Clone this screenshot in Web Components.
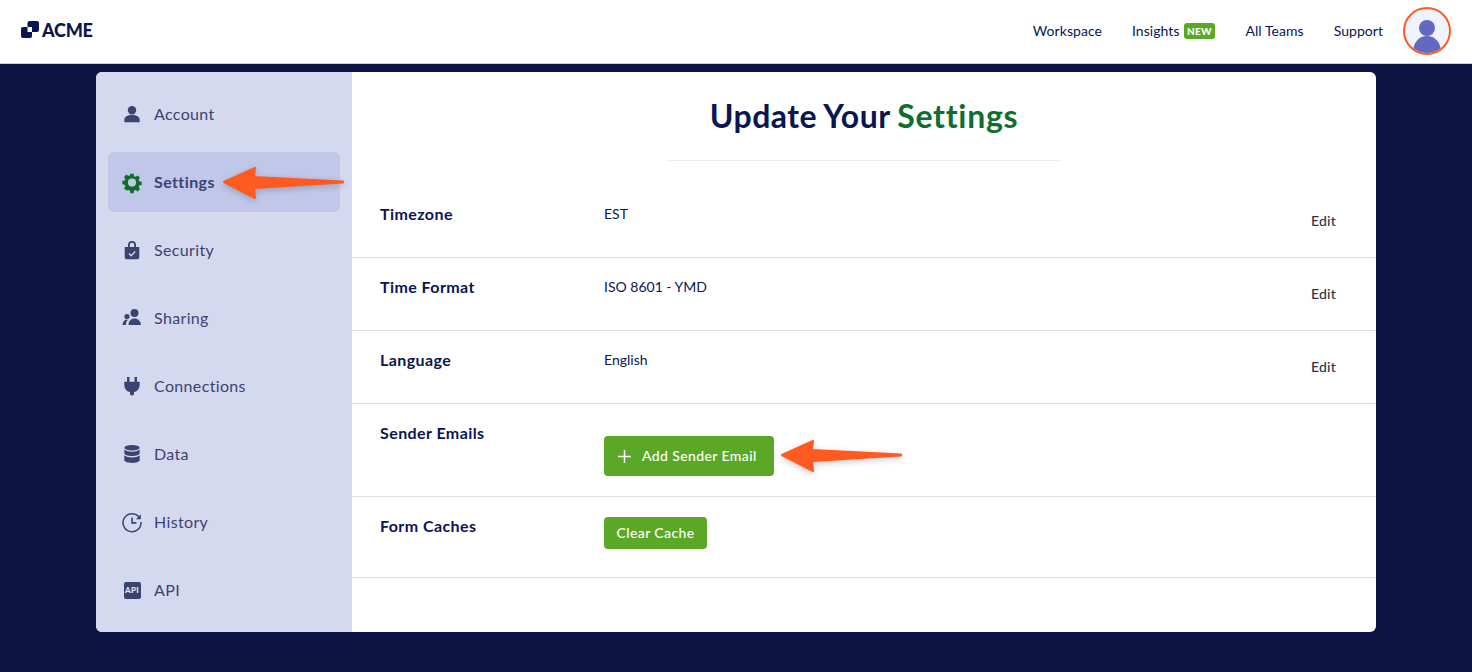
<!DOCTYPE html>
<html lang="en"><head><meta charset="utf-8"><title>Settings</title>
<style>
html,body{margin:0;padding:0;height:672px;overflow:hidden;background:#0c1444;font-family:Lato,"Liberation Sans",sans-serif}
</style></head><body>
<app-shell></app-shell>
<script>
const ICONS={
account:'<circle cx="10" cy="6.200" r="4.200"/><path d="M2.300 18.300v-2.300C2.300 12.800 5.500 11 10 11s7.700 1.800 7.700 5v2.300z"/>',
settings:'<g transform="translate(.5 1) scale(.95)"><path fill="#0f6e2e" fill-rule="evenodd" d="M8.300.8h3.400l.5 2.500 1.600.7 2.200-1.400 2.400 2.400-1.400 2.200.7 1.600 2.500.5v3.400l-2.500.5-.7 1.600 1.400 2.200-2.400 2.400-2.200-1.400-1.600.7-.5 2.500H8.300l-.5-2.500-1.600-.7L4 18.500l-2.400-2.400L3 13.900l-.7-1.600-2.500-.5V8.400l2.500-.5.700-1.600L1.600 4.100 4 1.700l2.200 1.400 1.600-.7zM10 5.800a4.300 4.300 0 1 0 0 8.600 4.300 4.300 0 0 0 0-8.600z"/></g>',
security:'<path fill-rule="evenodd" d="M6 7V5a4 4 0 0 1 8 0v2h3.300v10.300a2 2 0 0 1-2 2H4.700a2 2 0 0 1-2-2V7zm1.800 0h4.400V5a2.200 2.200 0 0 0-4.400 0z"/><path d="M7 13.500l2.200 2.200L13.200 11.500" fill="none" stroke="#d5d9ef" stroke-width="1.300"/>',
sharing:'<circle cx="12.500" cy="5" r="4"/><path d="M6.500 17c0-4 2.500-6.500 6-6.500s6 2.500 6.500 6.500z"/><circle cx="5" cy="8.500" r="2.600"/><path d="M.5 17c.3-3 1.800-5 4-5.400.6 0 1 .2 1.200.4C4.500 13.500 4 15 3.800 17z"/>',
connections:'<path d="M5 1h2.500v5H5zM12.500 1H15v5h-2.500zM2.300 5.800h15.400v2.700c0 4-2.200 7-5.700 7.600v2.400l-2 1.300-2-1.300v-2.400C4.500 15.500 2.300 12.500 2.300 8.500z"/>',
data:'<ellipse cx="10" cy="3.700" rx="7.700" ry="2.800"/><path d="M2.300 5.600v3.500c0 1.700 3.400 3 7.700 3s7.700-1.300 7.700-3V5.600C16 7.200 13 7.800 10 7.800S4 7.200 2.300 5.600z"/><path d="M2.300 11.300v4.800c0 1.700 3.400 2.900 7.700 2.900s7.700-1.200 7.700-2.900v-4.800C16 12.900 13 13.500 10 13.500s-6-.6-7.700-2.200z"/>',
history:'<path d="M17.300 5.400A9 9 0 1 0 19 10" fill="none" stroke="currentColor" stroke-width="1.500"/><path d="M18.800 2.200v5h-5z"/><path d="M9.300 5.500h1.600v4.600h3.500v1.600H9.300z"/>'
};
class NavIcon extends HTMLElement{
  connectedCallback(){
    const n=this.getAttribute('name');
    const r=this.attachShadow({mode:'open'});
    const st='<style>:host{display:block;width:20px;height:20px}svg{display:block;width:20px;height:20px;fill:currentColor;overflow:visible}.api{width:17px;height:17px;margin:1.500px;border-radius:2px;background:#3b4371;color:#e4e7f6;font:900 8px/17px Lato,sans-serif;text-align:center}</style>';
    r.innerHTML=st+(n==='api'?'<div class="api">API</div>':`<svg viewBox="0 0 20 20">${ICONS[n]}</svg>`);
  }
}
customElements.define('nav-icon',NavIcon);

class NavItem extends HTMLElement{
  connectedCallback(){
    const r=this.attachShadow({mode:'open'});
    r.innerHTML=`<style>
    :host{display:flex;align-items:center;height:60px;gap:12px;padding-left:14px;border-radius:6px;color:#3b4371;font:400 16px/20px Lato,sans-serif;letter-spacing:.35px}
    :host([active]){background:#c1c7e8;font-weight:700;letter-spacing:.4px}
    </style><nav-icon name="${this.getAttribute('icon')}"></nav-icon><slot></slot>`;
  }
}
customElements.define('nav-item',NavItem);

class SideNav extends HTMLElement{
  connectedCallback(){
    this.attachShadow({mode:'open'}).innerHTML=`<style>
    :host{display:flex;flex-direction:column;gap:8px;flex:0 0 256px;box-sizing:border-box;padding:12px;background:#d5d9ef}
    </style><slot></slot>`;
  }
}
customElements.define('side-nav',SideNav);

class TopBar extends HTMLElement{
  connectedCallback(){
    this.attachShadow({mode:'open'}).innerHTML=`<style>
    :host{display:flex;align-items:center;justify-content:space-between;box-sizing:border-box;height:64px;background:#fff;border-bottom:1px solid #c8ceed;padding:0 21px;color:#0a1551}
    .logo{display:flex;align-items:center;gap:3px;margin-top:-4px;font:900 18px/20px Lato,sans-serif;letter-spacing:-.2px}
    .logo svg{display:block;width:18px;height:17px}
    nav{display:flex;align-items:center;margin-top:-1px;font:400 14px/18px Lato,sans-serif;letter-spacing:.05px;color:#0a1551}
    .link{margin-right:30px;display:flex;align-items:center;gap:4px}
    .badge{background:#5ba826;color:#fff;font:900 10px/16px Lato,sans-serif;border-radius:3px;padding:0 3.500px;letter-spacing:.3px;height:16px}
    .ava{width:48px;height:48px;box-sizing:border-box;border-radius:50%;border:2px solid #ff5a1f;background:#eff3fd;overflow:hidden;margin-left:-10px}
    .ava svg{display:block;width:44px;height:44px}
    </style>
    <div class="logo"><svg viewBox="0 0 18 17"><rect x="6.500" y="0" width="11.500" height="11" rx="2" fill="#0a1551"/><rect x="0" y="6" width="11" height="11" rx="2" fill="#0a1551"/><rect x="6.500" y="6" width="4.500" height="5" fill="#fff"/></svg><span>ACME</span></div>
    <nav>
      <span class="link">Workspace</span>
      <span class="link">Insights <span class="badge">NEW</span></span>
      <span class="link">All Teams</span>
      <span class="link">Support</span>
      <div class="ava"><svg viewBox="0 0 44 44"><circle cx="22" cy="19" r="8" fill="#6269bf"/><path d="M8 44c0-11 6-17 14-17s14 6 14 17z" fill="#6269bf"/></svg></div>
    </nav>`;
  }
}
customElements.define('top-bar',TopBar);

class SettingRow extends HTMLElement{
  connectedCallback(){
    const edit=this.hasAttribute('edit');
    this.attachShadow({mode:'open'}).innerHTML=`<style>
    :host{display:grid;grid-template-columns:224px 1fr auto;box-sizing:border-box;border-bottom:1px solid #dcdde6;padding:20px 40px 0 28px;color:#0a1551}
    .l{font:700 16px/20px Lato,sans-serif;letter-spacing:.42px;margin-top:-1px}
    .v{font:400 14px/18px Lato,sans-serif}
    .e{font:500 14px/18px Lato,sans-serif;color:#2c3345;letter-spacing:.2px;margin-top:7px}
    </style><div class="l">${this.getAttribute('label')}</div><div class="v"><slot></slot></div>${edit?'<div class="e">Edit</div>':''}`;
  }
}
customElements.define('setting-row',SettingRow);

class GreenButton extends HTMLElement{
  connectedCallback(){
    const plus=this.hasAttribute('plus');
    this.attachShadow({mode:'open'}).innerHTML=`<style>
    :host{display:inline-flex;align-items:center;box-sizing:border-box;background:#5ba826;color:#fff;border-radius:4px;font:500 14px/18px Lato,sans-serif;letter-spacing:.4px;height:32px;padding:0 12.500px}
    :host([plus]){height:40px;padding:0 17.500px 0 14px;gap:11px}
    svg{display:block;width:13px;height:13px}
    </style>${plus?'<svg viewBox="0 0 13 13"><path d="M6.500 0v13M0 6.500h13" stroke="#fff" stroke-width="1.500" fill="none"/></svg>':''}<slot></slot>`;
  }
}
customElements.define('green-button',GreenButton);

class CallArrow extends HTMLElement{
  connectedCallback(){
    const w=this.getAttribute('w')||'124';
    this.attachShadow({mode:'open'}).innerHTML=`<style>
    :host{position:absolute;display:block;width:${w}px;height:36px;filter:drop-shadow(0 2px 3px rgba(0,0,0,.22))}
    svg{display:block;width:100%;height:100%;overflow:visible}
    </style><svg viewBox="0 0 ${w} 36"><path fill="#ff5a1f" stroke="#ff5a1f" stroke-width="2" stroke-linejoin="round" d="M2 17 33 3 32 12 ${w-3} 16.500 ${w-3} 17.500 32 23 33 33z"/></svg>`;
  }
}
customElements.define('call-arrow',CallArrow);

class AppShell extends HTMLElement{
  connectedCallback(){
    this.attachShadow({mode:'open'}).innerHTML=`<style>
    :host{display:block;position:relative;height:672px;font-family:Lato,sans-serif}
    .card{display:flex;margin:8px 96px 0;height:560px;border-radius:6px;overflow:hidden;background:#fff}
    main{flex:1;min-width:0;display:flex;flex-direction:column}
    h1{margin:0;text-align:center;color:#0a1551;font:700 32px/40px Lato,sans-serif;padding-top:24px;letter-spacing:.5px;word-spacing:-1px}
    h1 span{color:#0f6e2e;letter-spacing:.7px}
    hr{width:396px;height:1px;border:0;background:#eceef2;margin:24px auto 24px}
    .r1{height:73px}.r4{height:93px}.r5{height:81px}
    setting-row{flex:none}
    .b1{margin-top:12px}
    .a1{left:222px;top:165px}.a2{left:780px;top:438px}
    </style>
    <top-bar></top-bar>
    <div class="card">
      <side-nav>
        <nav-item icon="account">Account</nav-item>
        <nav-item icon="settings" active>Settings</nav-item>
        <nav-item icon="security">Security</nav-item>
        <nav-item icon="sharing">Sharing</nav-item>
        <nav-item icon="connections">Connections</nav-item>
        <nav-item icon="data">Data</nav-item>
        <nav-item icon="history">History</nav-item>
        <nav-item icon="api">API</nav-item>
      </side-nav>
      <main>
        <h1>Update Your <span>Settings</span></h1>
        <hr>
        <setting-row class="r1" label="Timezone" edit>EST</setting-row>
        <setting-row class="r1" label="Time Format" edit>ISO 8601 - YMD</setting-row>
        <setting-row class="r1" label="Language" edit>English</setting-row>
        <setting-row class="r4" label="Sender Emails"><green-button class="b1" plus>Add Sender Email</green-button></setting-row>
        <setting-row class="r5" label="Form Caches"><green-button>Clear Cache</green-button></setting-row>
      </main>
    </div>
    <call-arrow class="a1"></call-arrow>
    <call-arrow class="a2"></call-arrow>`;
  }
}
customElements.define('app-shell',AppShell);
</script>
</body></html>
